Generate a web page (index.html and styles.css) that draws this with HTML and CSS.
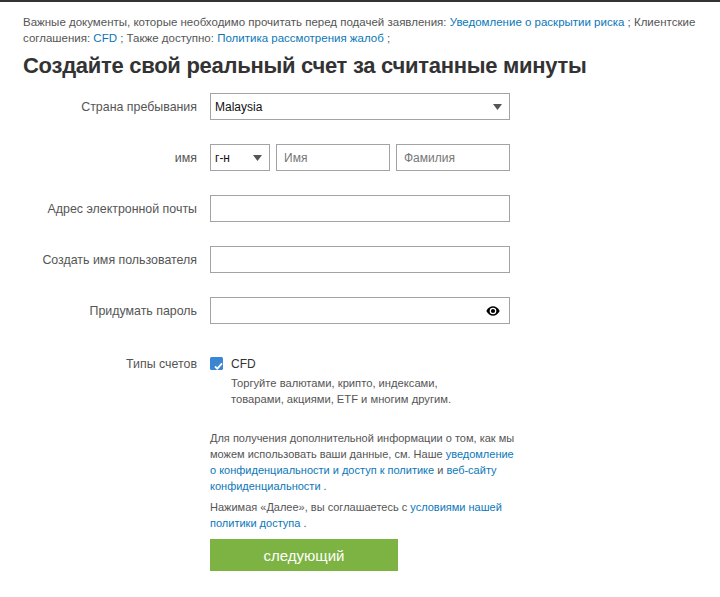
FILE: index.html
```html
<!DOCTYPE html>
<html lang="ru">
<head>
<meta charset="utf-8">
<title>Создайте свой реальный счет</title>
<link rel="stylesheet" href="styles.css">
</head>
<body>
<div class="page">
  <p class="docs">Важные документы, которые необходимо прочитать перед подачей заявления: <a href="#">Уведомление о раскрытии риска</a> ; Клиентские соглашения: <a href="#">CFD</a> ; Также доступно: <a href="#">Политика рассмотрения жалоб</a> ;</p>
  <h1 class="title">Создайте свой реальный счет за считанные минуты</h1>
  <form class="form">
    <div class="row">
      <label class="label">Страна пребывания</label>
      <div class="field">
        <div class="select-wrap wide">
          <select class="select"><option>Malaysia</option></select>
          <svg class="arrow" width="9" height="6" viewBox="0 0 9 6"><path d="M0 0H9L4.5 6Z" fill="#555"/></svg>
        </div>
      </div>
    </div>
    <div class="row">
      <label class="label">имя</label>
      <div class="field name-field">
        <div class="select-wrap title-sel">
          <select class="select"><option>г-н</option></select>
          <svg class="arrow" width="9" height="6" viewBox="0 0 9 6"><path d="M0 0H9L4.5 6Z" fill="#555"/></svg>
        </div>
        <input class="input name" type="text" placeholder="Имя">
        <input class="input name" type="text" placeholder="Фамилия">
      </div>
    </div>
    <div class="row">
      <label class="label">Адрес электронной почты</label>
      <div class="field"><input class="input wide" type="text"></div>
    </div>
    <div class="row">
      <label class="label">Создать имя пользователя</label>
      <div class="field"><input class="input wide" type="text"></div>
    </div>
    <div class="row">
      <label class="label">Придумать пароль</label>
      <div class="field">
        <div class="pass-wrap">
          <input class="input wide" type="password">
          <svg class="eye" width="14" height="10" viewBox="0 0 14 10"><path d="M0.3 5C2 1.8 4.3 0.3 7 0.3S12 1.8 13.7 5C12 8.2 9.7 9.7 7 9.7S2 8.2 0.3 5Z" fill="#000"/><circle cx="7" cy="5" r="3.3" fill="#fff"/><circle cx="7" cy="5" r="2.1" fill="#000"/></svg>
        </div>
      </div>
    </div>
    <div class="row accounts">
      <label class="label">Типы счетов</label>
      <div class="field col">
        <div class="check-line">
          <span class="checkbox"><svg width="13" height="13" viewBox="0 0 13 13"><rect x="0" y="0" width="13" height="13" rx="1.5" fill="#3a86d4"/><path d="M5 9.5L7.3 11.6L12 6.3" stroke="#fff" stroke-width="1.8" fill="none"/></svg></span>
          <span class="check-label">CFD</span>
        </div>
        <p class="check-desc">Торгуйте валютами, крипто, индексами,<br>товарами, акциями, ETF и многим другим.</p>
        <p class="note privacy">Для получения дополнительной информации о том, как мы можем использовать ваши данные, см. Наше <a href="#">уведомление о конфиденциальности и доступ к политике</a> и <a href="#">веб-сайту конфиденциальности</a> .</p>
        <p class="note agree">Нажимая «Далее», вы соглашаетесь с <a href="#">условиями нашей политики доступа</a> .</p>
        <button class="next" type="button">следующий</button>
      </div>
    </div>
  </form>
</div>
</body>
</html>
```
FILE: styles.css
```css
* { box-sizing: border-box; }
html, body { margin: 0; padding: 0; background: #fff; }
body {
  font-family: "Liberation Sans", Arial, sans-serif;
  color: #555;
  border-top: 2px solid #333;
}
.page { padding: 12px 23px 0 23px; }
a { color: #0b77b8; text-decoration: none; }
.docs {
  margin: 0;
  font-size: 11.5px;
  line-height: 16px;
  color: #555;
}
.title {
  margin: 7px 0 14px 0;
  font-size: 22px;
  line-height: 26px;
  font-weight: bold;
  color: #333;
  letter-spacing: -0.28px;
}
.form { display: flex; flex-direction: column; gap: 24px; }
.row { display: grid; grid-template-columns: 174px 300px; column-gap: 13px; align-items: center; }
.label { text-align: right; font-size: 12.4px; color: #555; }
.field { display: flex; }
.name-field { gap: 6px; }
.select-wrap { position: relative; }
.select-wrap.wide { width: 300px; }
.select-wrap.title-sel { width: 61px; }
.select {
  appearance: none;
  -webkit-appearance: none;
  width: 100%;
  height: 27px;
  border: 1px solid #a3a3a3;
  border-radius: 0;
  background: #fff;
  font-family: "Liberation Sans", Arial, sans-serif;
  font-size: 12px;
  color: #111;
  padding: 0 4px;
  margin: 0;
}
.arrow { position: absolute; right: 8px; top: 11px; }
.input {
  height: 27px;
  border: 1px solid #a3a3a3;
  border-radius: 0;
  background: #fff;
  font-family: "Liberation Sans", Arial, sans-serif;
  font-size: 12px;
  color: #111;
  padding: 0 7px;
  margin: 0;
}
.input::placeholder { color: #777; }
.input.wide { width: 300px; }
.input.name { width: 114px; }
.pass-wrap { position: relative; }
.eye { position: absolute; right: 10px; top: 9px; }
.accounts { align-items: start; margin-top: 8px; }
.accounts .label { padding-top: 1px; line-height: 14px; }
.col { flex-direction: column; }
.check-line { display: flex; align-items: center; gap: 8px; height: 15px; margin-top: 0; }
.checkbox { display: block; width: 13px; height: 13px; }
.checkbox svg { display: block; }
.check-label { font-size: 12px; color: #333; }
.check-desc {
  margin: 4px 0 0 21px;
  font-size: 11.2px;
  line-height: 16px;
  color: #555;
}
.note {
  margin: 0;
  width: 310px;
  font-size: 11px;
  line-height: 16px;
  color: #555;
}
.privacy { margin-top: 23px; }
.agree { margin-top: 5px; }
.next {
  margin-top: 8px;
  width: 188px;
  height: 32px;
  border: 0;
  background: #7cb342;
  color: #fff;
  font-family: "Liberation Sans", Arial, sans-serif;
  font-size: 15px;
  padding: 0;
  cursor: pointer;
}
```
